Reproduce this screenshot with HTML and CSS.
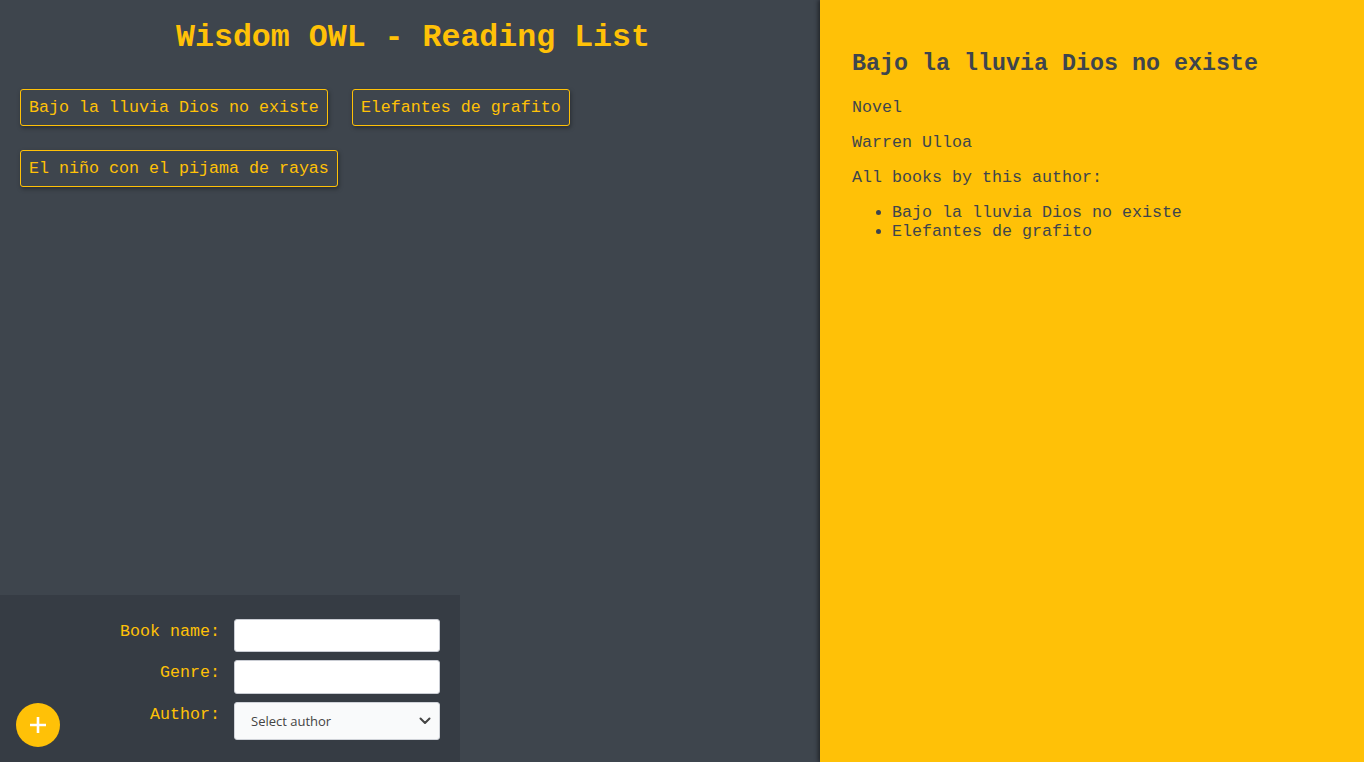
FILE: index.html
```html
<!DOCTYPE html>
<html>
<head>
<meta charset="utf-8">
<title>Wisdom OWL - Reading List</title>
<link rel="stylesheet" href="styles.css">
</head>
<body>
<div class="app">
  <div class="left">
    <h1 class="title">Wisdom OWL - Reading List</h1>
    <div class="books">
      <button class="book">Bajo la lluvia Dios no existe</button>
      <button class="book">Elefantes de grafito</button>
      <button class="book">El niño con el pijama de rayas</button>
    </div>
    <form class="form">
      <label class="lbl">Book name:</label>
      <input class="inp" type="text">
      <label class="lbl">Genre:</label>
      <input class="inp" type="text">
      <label class="lbl">Author:</label>
      <div class="selwrap">
        <select class="sel"><option>Select author</option></select>
        <svg class="chev" width="12" height="8" viewBox="0 0 12 8"><path d="M1.5 1.5 L6 6 L10.5 1.5" fill="none" stroke="#444" stroke-width="2" stroke-linecap="round" stroke-linejoin="round"/></svg>
      </div>
      <button type="button" class="add"><svg width="18" height="18" viewBox="0 0 18 18"><path d="M9 1 V17 M1 9 H17" stroke="#fff" stroke-width="2.6"/></svg></button>
    </form>
  </div>
  <div class="right">
    <h2 class="dtitle">Bajo la lluvia Dios no existe</h2>
    <p class="dp">Novel</p>
    <p class="dp">Warren Ulloa</p>
    <p class="dp">All books by this author:</p>
    <ul class="dlist">
      <li>Bajo la lluvia Dios no existe</li>
      <li>Elefantes de grafito</li>
    </ul>
  </div>
</div>
</body>
</html>
```
FILE: styles.css
```css
html, body {
  margin: 0;
  padding: 0;
  height: 100%;
  overflow: hidden;
}
body {
  font-family: "Liberation Mono", "Courier New", monospace;
}
.app {
  display: flex;
  height: 762px;
}
.left {
  width: 820px;
  flex: none;
  background: #3e454d;
  display: flex;
  flex-direction: column;
}
.title {
  margin: 19px 0 32px;
  text-align: center;
  color: #ffc107;
  font-size: 31.6px;
  line-height: 38px;
  font-weight: bold;
  padding-left: 6px;
}
.books {
  display: flex;
  flex-wrap: wrap;
  gap: 24px;
  padding: 0 20px;
  width: 600px;
}
.book {
  font-family: "Liberation Mono", "Courier New", monospace;
  font-size: 16.67px;
  line-height: 19px;
  color: #ffc107;
  background: transparent;
  border: 1px solid #ffc107;
  border-radius: 3px;
  padding: 8px 8px;
  box-shadow: 1px 2px 4px rgba(0,0,0,0.35);
  cursor: pointer;
}
.form {
  margin-top: auto;
  width: 460px;
  box-sizing: border-box;
  background: #363c44;
  display: grid;
  grid-template-columns: 1fr 206px;
  grid-template-rows: 33px 34px 38px;
  column-gap: 14px;
  row-gap: 8px;
  padding: 24px 20px 22px 0;
  position: relative;
}
.lbl {
  text-align: right;
  color: #ffc107;
  font-size: 16.67px;
  line-height: 19px;
  padding-top: 2.5px;
}
.inp {
  height: 100%;
  box-sizing: border-box;
  border: 1px solid #c9ccd3;
  border-radius: 3px;
  background: #fff;
  margin: 0;
}
.selwrap {
  position: relative;
}
.sel {
  appearance: none;
  -webkit-appearance: none;
  width: 206px;
  height: 38px;
  box-sizing: border-box;
  border: 1px solid #d0d3d9;
  border-radius: 3px;
  background: #f9fafb;
  font-family: "Open Sans", "Noto Sans", sans-serif;
  font-size: 13px;
  color: #444;
  padding: 0 16px;
  margin: 0;
}
.chev {
  position: absolute;
  right: 9px;
  top: 15px;
  pointer-events: none;
}
.add {
  position: absolute;
  left: 16px;
  bottom: 15px;
  width: 44px;
  height: 44px;
  border-radius: 50%;
  border: none;
  background: #ffc107;
  padding: 0;
  display: flex;
  align-items: center;
  justify-content: center;
  cursor: pointer;
}
.right {
  flex: 1;
  background: #ffc107;
  box-shadow: -2px 0 4px rgba(0,0,0,0.45);
  padding: 32px;
  color: #3e454d;
  position: relative;
}
.dtitle {
  margin: 19px 0 21px;
  font-size: 23.33px;
  line-height: 26px;
  font-weight: bold;
}
.dp {
  margin: 0 0 16px;
  font-size: 16.67px;
  line-height: 19px;
}
.dlist {
  margin: 0;
  padding-left: 40px;
  font-size: 16.67px;
  line-height: 19px;
}
```
